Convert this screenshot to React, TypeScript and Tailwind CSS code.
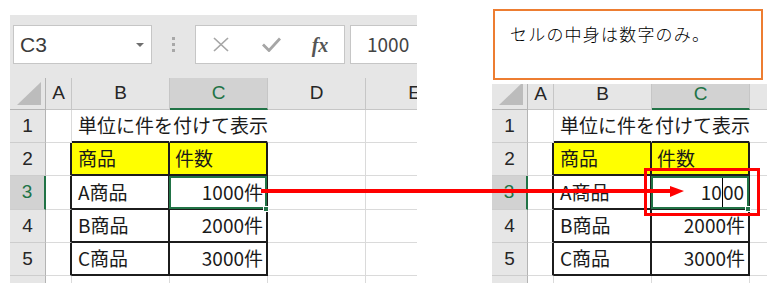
import React from 'react';

const JP = "font-['Noto_Sans_CJK_JP',sans-serif]";
const LAT = "font-['Liberation_Sans',Arial,sans-serif]";

const ROW_HEIGHTS = ['h-[33px]', 'h-[33px]', 'h-[34px]', 'h-[33px]', 'h-[33px]'];
const COL_W: Record<string, string> = {
  A: 'w-[26px]',
  B: 'w-[98px]',
  C: 'w-[98px]',
  D: 'w-[98px]',
  E: 'w-[98px]',
};

const GRID = 'border-r border-b border-[#dadada]';
const TABLE = 'border-r-2 border-b-2 border-[#1c1c1c]';

const DATA = [
  { b: '単位に件を付けて表示', c: '' },
  { b: '商品', c: '件数' },
  { b: 'A商品', c: '1000件' },
  { b: 'B商品', c: '2000件' },
  { b: 'C商品', c: '3000件' },
];

function Toolbar() {
  return (
    <div className="h-[63px] shrink-0 flex items-start pl-[3px] pt-[10px]">
      <div className="w-[139px] h-[39px] shrink-0 bg-white border border-[#c6c6c6] flex items-center justify-between pl-[6px] pr-[7px]">
        <span className={`${LAT} text-[21px] text-[#3b3b3b]`}>C3</span>
        <svg width="8" height="4" viewBox="0 0 8 4">
          <polygon points="0,0 8,0 4,4" fill="#6e6e6e" />
        </svg>
      </div>
      <div className="w-[43px] h-[39px] shrink-0 flex flex-col items-center justify-center gap-[3px]">
        <span className="w-[3px] h-[3px] bg-[#a8a8a8]" />
        <span className="w-[3px] h-[3px] bg-[#a8a8a8]" />
        <span className="w-[3px] h-[3px] bg-[#a8a8a8]" />
      </div>
      <div className="w-[150px] h-[39px] shrink-0 bg-white border border-[#c6c6c6] flex items-center">
        <div className="w-[50px] flex justify-center">
          <svg width="16" height="15" viewBox="0 0 16 15">
            <path d="M1 1 L15 14 M15 1 L1 14" stroke="#a6a6a6" strokeWidth="1.7" />
          </svg>
        </div>
        <div className="w-[50px] flex justify-center">
          <svg width="19" height="15" viewBox="0 0 19 15">
            <polyline points="1,7.5 7,13.5 18,1.5" fill="none" stroke="#a6a6a6" strokeWidth="2.8" />
          </svg>
        </div>
        <div className="flex-1 flex justify-center">
          <span className="font-['Liberation_Serif',serif] italic font-bold text-[20px] leading-none text-[#555]">fx</span>
        </div>
      </div>
      <div className="ml-[5px] w-[200px] h-[39px] shrink-0 bg-white border border-[#c6c6c6] flex items-center pl-[16px] text-[19px] text-[#444]">
        1000
      </div>
    </div>
  );
}

function HeaderRow({ short, cols }: { short: boolean; cols: string[] }) {
  return (
    <div className={`flex shrink-0 ${short ? 'h-[26px]' : 'h-[32px]'} ${LAT} text-[19px] text-[#262626]`}>
      <div className="w-[36px] shrink-0 overflow-hidden flex items-end justify-end pr-[4px] pb-[4px] border-r border-b border-[#b4b4b4]">
        <svg className="shrink-0" width="24" height="23" viewBox="0 0 24 23">
          <polygon points="24,0 24,23 0,23" fill="#bcbcbc" />
        </svg>
      </div>
      {cols.map((c) =>
        c === 'C' ? (
          <div
            key={c}
            className={`w-[98px] shrink-0 flex items-center justify-center bg-[#d2d2d2] text-[#217346] border-r border-r-[#c6c6c6] border-b-2 border-b-[#217346] ${short ? 'pb-[3px]' : ''}`}
          >
            C
          </div>
        ) : (
          <div
            key={c}
            className={`${COL_W[c]} shrink-0 flex items-center justify-center border-r border-b border-[#c6c6c6] ${short ? 'pb-[4px]' : ''}`}
          >
            {short && c === 'D' ? '' : c}
          </div>
        )
      )}
    </div>
  );
}

function ActiveBox({ edit }: { edit: boolean }) {
  return (
    <>
      <div className="absolute -left-[1px] top-0 -right-[1px] -bottom-[1px] border-2 border-[#217346]" />
      <div className="absolute -right-[3px] -bottom-[4px] w-[6px] h-[6px] bg-[#217346] border border-white" />
      {edit && (
        <div className="absolute -left-[8px] -top-[8px] -right-[12px] -bottom-[8px] border-[3px] border-[#ff0000]" />
      )}
    </>
  );
}

function Sheet({ short, edit }: { short: boolean; edit: boolean }) {
  const cols = short ? ['A', 'B', 'C', 'D'] : ['A', 'B', 'C', 'D', 'E'];
  return (
    <div className="flex flex-col">
      <HeaderRow short={short} cols={cols} />
      {DATA.map((row, i) => (
        <div key={i} className={`flex shrink-0 bg-white text-[19px] text-[#1a1a1a] ${ROW_HEIGHTS[i]}`}>
          <div
            className={`w-[36px] shrink-0 flex items-center justify-center ${LAT} border-b border-b-[#cdcdcd] ${
              i === 2
                ? 'bg-[#d2d2d2] text-[#217346] border-r-2 border-r-[#217346]'
                : 'bg-[#e6e6e6] text-[#262626] border-r border-r-[#b4b4b4]'
            }`}
          >
            {i + 1}
          </div>
          <div
            className={`w-[26px] shrink-0 ${
              i === 0 ? GRID : 'border-r-2 border-r-[#1c1c1c] border-b border-b-[#dadada]'
            }`}
          />
          {i === 0 ? (
            <>
              <div className="w-[98px] shrink-0 flex items-center pl-[6px] border-r border-r-transparent border-b-2 border-b-[#1c1c1c]">
                <span className="whitespace-nowrap">{row.b}</span>
              </div>
              <div className="w-[98px] shrink-0 border-r border-r-transparent border-b-2 border-b-[#1c1c1c]" />
            </>
          ) : (
            <>
              <div className={`w-[98px] shrink-0 flex items-center pl-[6px] ${TABLE} ${i === 1 ? 'bg-[#ffff00]' : ''}`}>
                {row.b}
              </div>
              {i === 1 ? (
                <div className={`w-[98px] shrink-0 flex items-center pl-[5px] bg-[#ffff00] ${TABLE}`}>{row.c}</div>
              ) : i === 2 ? (
                <div className={`relative w-[98px] shrink-0 flex items-center justify-end ${TABLE} ${edit ? 'pr-[4px]' : 'pr-[3px]'}`}>
                  {edit ? (
                    <div className="flex h-full items-center">
                      <span>10</span>
                      <span className="w-px self-stretch bg-black" />
                      <span>00</span>
                    </div>
                  ) : (
                    row.c
                  )}
                  <ActiveBox edit={edit} />
                </div>
              ) : (
                <div className={`w-[98px] shrink-0 flex items-center justify-end pr-[3px] ${TABLE}`}>{row.c}</div>
              )}
            </>
          )}
          <div className={`w-[98px] shrink-0 ${GRID}`} />
          {!short && <div className={`w-[98px] shrink-0 ${GRID}`} />}
        </div>
      ))}
      <div className="flex shrink-0 h-[7px] bg-white">
        <div className="w-[36px] shrink-0 bg-[#e6e6e6] border-r border-r-[#b4b4b4]" />
        <div className="w-[26px] shrink-0 border-r border-[#dadada]" />
        <div className="w-[98px] shrink-0 border-r border-[#dadada]" />
        <div className="w-[98px] shrink-0 border-r border-[#dadada]" />
        <div className="w-[98px] shrink-0 border-r border-[#dadada]" />
        {!short && <div className="w-[98px] shrink-0 border-r border-[#dadada]" />}
      </div>
    </div>
  );
}

export default function App() {
  return (
    <div className={`relative flex items-start w-[776px] h-[291px] bg-white overflow-hidden ${JP}`}>
      <div className="ml-[10px] mt-[15px] w-[407px] h-[268px] shrink-0 overflow-hidden bg-[#e6e6e6] flex flex-col">
        <Toolbar />
        <Sheet short={false} edit={false} />
      </div>
      <div className="ml-[75px] shrink-0 flex flex-col">
        <div className="ml-[1px] mt-[9px] w-[270px] h-[71px] border-2 border-[#ed7d31] bg-white pl-[15px] pt-[13px] text-[17px] leading-[20px] tracking-[1.2px] font-light text-black whitespace-nowrap">
          セルの中身は数字のみ。
        </div>
        <div className="mt-[4px] w-[275px] h-[199px] overflow-hidden bg-[#e6e6e6] flex flex-col">
          <Sheet short edit />
        </div>
      </div>
      <svg className="absolute left-[258px] top-[184px]" width="430" height="14" viewBox="0 0 430 14">
        <line x1="3" y1="7" x2="414" y2="7" stroke="#ff0000" strokeWidth="4" />
        <polygon points="412,2 426,7 412,13" fill="#ff0000" />
      </svg>
    </div>
  );
}
